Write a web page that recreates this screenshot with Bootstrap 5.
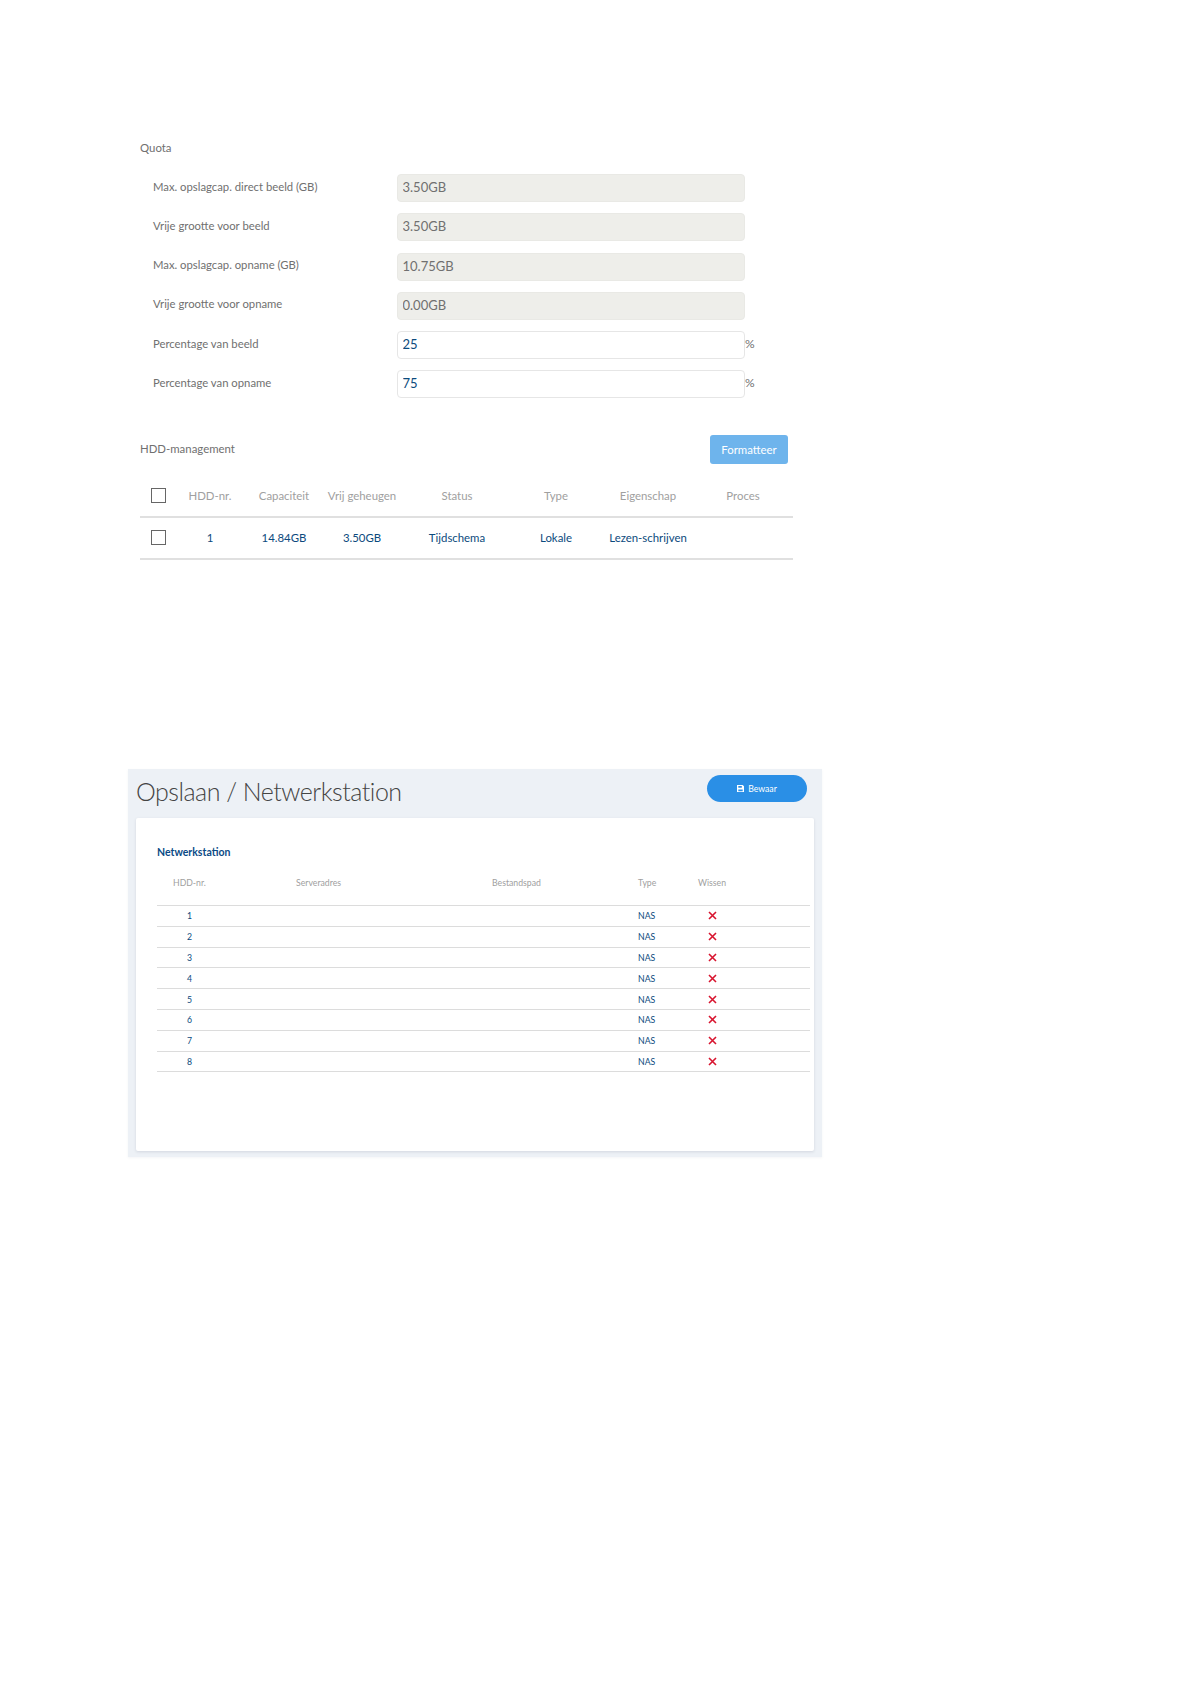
<!DOCTYPE html>
<html lang="nl">
<head>
<meta charset="utf-8">
<title>Opslaan</title>
<link href="https://cdn.jsdelivr.net/npm/bootstrap@5.3.0/dist/css/bootstrap.min.css" rel="stylesheet">
<style>
html,body{background:#fff}
body{font-family:Lato,"Liberation Sans",sans-serif;color:#707070;height:1684px;overflow:hidden}
.quota-wrap{margin:139px 0 0 140px;width:653px}
.sec-title{font-size:11.4px;line-height:18px;color:#707070}
.hdd-head .sec-title{padding-bottom:2px}
.quota-rows{margin:17px 0 0 13px;display:flex;flex-direction:column;gap:11.3px}
.q-label{width:244px;font-size:11.3px;color:#707070;flex:none;padding-bottom:2px;margin:0}
.form-control.q-input{width:348px;height:28px;flex:none;padding:0 4.5px 2px;font-size:13px;border-radius:4px;border:1px solid #e6e6e6;color:#0b4a7d;background:#fff;box-shadow:none}
.form-control.q-input:disabled{background:#eeeeea;border-color:#e9e9e5;color:#707070;opacity:1}
.pct{font-size:12px;color:#707070;padding-bottom:2px}
.hdd-head{margin-top:37px;height:29px}
.btn.fmt-btn{width:78px;height:29px;margin-right:5px;padding:0 0 1px;font-size:11.4px;color:#fff;background:#6eb4ec;border:0;border-radius:3px;opacity:1}
.table.hdd-table{table-layout:fixed;width:653px;margin:0;font-size:11.4px;text-align:center;--bs-table-border-color:#e0e0e0}
.hdd-table th{font-weight:400;color:#a0a0a0;height:53px;padding:11px 0 0;vertical-align:middle;border-bottom:2px solid #e0e0e0}
.hdd-table td{color:#0b4a7d;height:42px;padding:0 0 2px;vertical-align:middle;border-bottom:2px solid #e0e0e0}
.form-check-input.hdd-check{width:15px;height:15px;margin:0;border:1px solid #666;border-radius:0;display:block;margin-left:11px}
.w-a{width:38px}.w-b{width:64px}.w-c{width:84px}.w-d{width:72px}.w-e{width:118px}.w-f{width:80px}.w-g{width:104px}.w-h{width:93px}
.hdd-table .last-cell{padding-right:7px}
.net-panel{margin:209px 0 0 128px;width:694px;height:388px;background:#edf1f6;padding:0 8px 6px;display:flex;flex-direction:column;box-shadow:0 1px 2px rgba(120,130,150,.08)}
.net-head{height:49px;align-items:flex-start}
.net-title{font-size:25px;font-weight:300;line-height:45px;color:#444;margin:0;letter-spacing:-.5px}
.btn.save-btn{width:100px;height:27px;margin:6px 7px 0 0;padding:0;border:0;border-radius:14px;background:#2a8fe6;color:#fff;font-size:8.7px;display:flex;align-items:center;justify-content:center;gap:4px}
.net-card{flex:1;background:#fff;border-radius:2px;box-shadow:0 1px 3px rgba(90,100,120,.18);padding:25px 4px 0 21px}
.net-sub{font-size:10.5px;font-weight:700;color:#0b4a85;line-height:18px}
.table.net-table{table-layout:fixed;width:653px;margin:6px 0 0;font-size:8.7px;--bs-table-border-color:#dcdcdc}
.net-table th{font-weight:400;color:#a0a0a0;height:38px;padding:0 0 8px;vertical-align:middle;border-bottom:1px solid #dcdcdc}
.net-table td{color:#0b4a7d;height:20.8px;padding:0;vertical-align:middle;border-bottom:1px solid #dcdcdc}
.n-a{width:139px}.n-b{width:196px}.n-c{width:146px}.n-d{width:60px}.n-e{width:112px}
.net-table .ind-a{padding-left:16px}.net-table .ind-n{padding-left:30px}
.del-x{display:block;margin-left:10px}
</style>
</head>
<body>
<section class="quota-wrap">
  <div class="sec-title">Quota</div>
  <div class="quota-rows">
    <div class="d-flex align-items-center"><label class="q-label">Max. opslagcap. direct beeld (GB)</label><input class="form-control q-input" disabled value="3.50GB"></div>
    <div class="d-flex align-items-center"><label class="q-label">Vrije grootte voor beeld</label><input class="form-control q-input" disabled value="3.50GB"></div>
    <div class="d-flex align-items-center"><label class="q-label">Max. opslagcap. opname (GB)</label><input class="form-control q-input" disabled value="10.75GB"></div>
    <div class="d-flex align-items-center"><label class="q-label">Vrije grootte voor opname</label><input class="form-control q-input" disabled value="0.00GB"></div>
    <div class="d-flex align-items-center"><label class="q-label">Percentage van beeld</label><input class="form-control q-input" value="25"><span class="pct">%</span></div>
    <div class="d-flex align-items-center"><label class="q-label">Percentage van opname</label><input class="form-control q-input" value="75"><span class="pct">%</span></div>
  </div>
  <div class="hdd-head d-flex justify-content-between align-items-center">
    <span class="sec-title">HDD-management</span>
    <button class="btn fmt-btn" type="button">Formatteer</button>
  </div>
  <table class="table hdd-table">
    <colgroup><col class="w-a"><col class="w-b"><col class="w-c"><col class="w-d"><col class="w-e"><col class="w-f"><col class="w-g"><col class="w-h"></colgroup>
    <thead><tr><th><input type="checkbox" class="form-check-input hdd-check" aria-label="Alles"></th><th>HDD-nr.</th><th>Capaciteit</th><th>Vrij geheugen</th><th>Status</th><th>Type</th><th>Eigenschap</th><th class="last-cell">Proces</th></tr></thead>
    <tbody><tr><td><input type="checkbox" class="form-check-input hdd-check" aria-label="HDD 1"></td><td>1</td><td>14.84GB</td><td>3.50GB</td><td>Tijdschema</td><td>Lokale</td><td>Lezen-schrijven</td><td></td></tr></tbody>
  </table>
</section>

<section class="net-panel">
  <div class="net-head d-flex justify-content-between">
    <h1 class="net-title">Opslaan / Netwerkstation</h1>
    <button class="btn save-btn" type="button">
      <svg width="7" height="7" viewBox="0 0 8 8" aria-hidden="true"><path fill="#fff" d="M0 0h6.5L8 1.5V8H0z"/><path fill="#2a8fe6" d="M1.5 1h4v2h-4zM1.5 5h5v2h-5z"/></svg>
      Bewaar
    </button>
  </div>
  <div class="net-card">
    <div class="net-sub">Netwerkstation</div>
    <table class="table net-table">
      <colgroup><col class="n-a"><col class="n-b"><col class="n-c"><col class="n-d"><col class="n-e"></colgroup>
      <thead><tr><th class="ind-a">HDD-nr.</th><th>Serveradres</th><th>Bestandspad</th><th>Type</th><th>Wissen</th></tr></thead>
      <tbody id="rows"></tbody>
    </table>
  </div>
</section>
<script>
var h='';
for(var i=1;i<=8;i++){
  h+='<tr><td class="ind-n">'+i+'</td><td></td><td></td><td>NAS</td><td><svg class="del-x" width="9" height="9" viewBox="0 0 9 9" aria-label="Wissen"><path d="M1 1l7 7M8 1L1 8" stroke="#d8152f" stroke-width="1.6" fill="none"/></svg></td></tr>';
}
document.getElementById('rows').innerHTML=h;
</script>
<script src="https://cdn.jsdelivr.net/npm/bootstrap@5.3.0/dist/js/bootstrap.bundle.min.js"></script>
</body>
</html>
